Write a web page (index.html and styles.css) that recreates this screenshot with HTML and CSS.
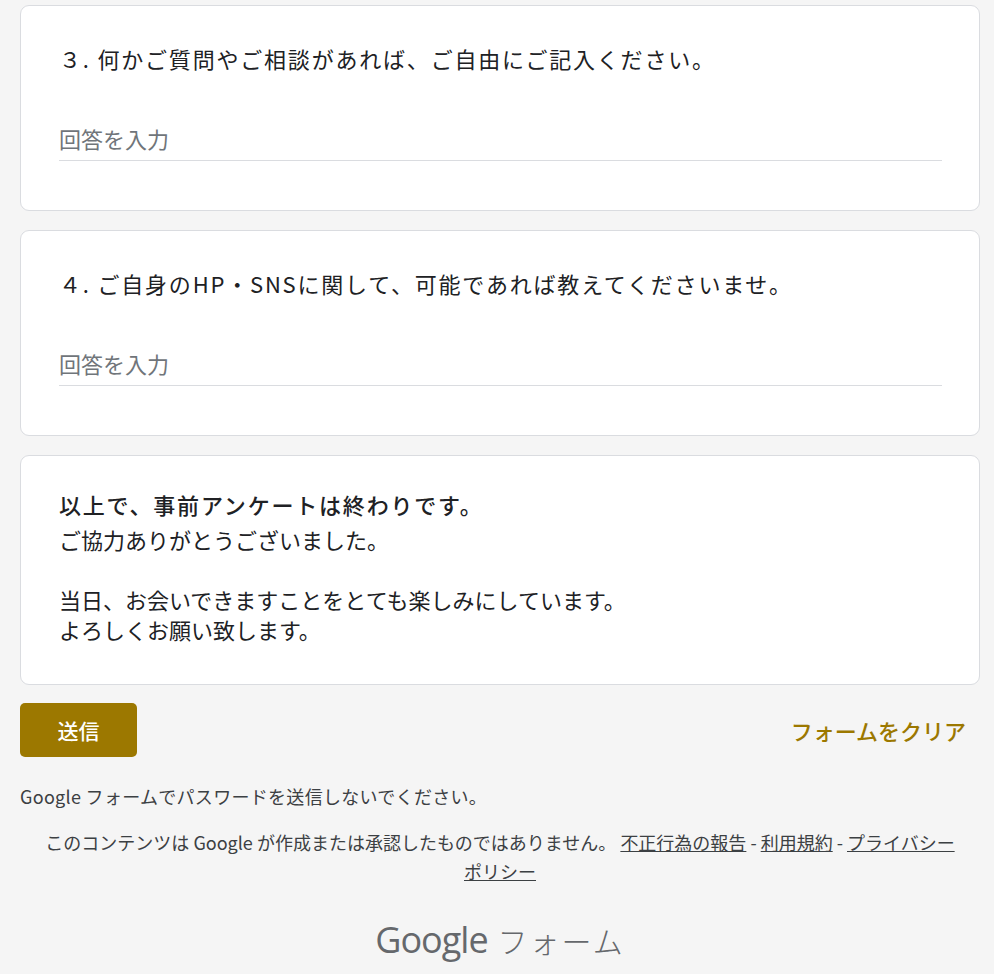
FILE: index.html
```html
<!doctype html>
<html lang="ja">

<head>
  <meta charset="utf-8" />
  <meta name="viewport" content="width=device-width, initial-scale=1.0" />
  <link rel="stylesheet" href="styles.css">
</head>

<body>
  <div class="form">
    <div class="card">
      <div class="question">３. 何かご質問やご相談があれば、ご自由にご記入ください。</div>
      <div class="answer">回答を入力</div>
    </div>

    <div class="card">
      <div class="question">４. ご自身のHP・SNSに関して、可能であれば教えてくださいませ。</div>
      <div class="answer">回答を入力</div>
    </div>

    <div class="card end">
      <div class="end-title">以上で、事前アンケートは終わりです。</div>
      <div class="end-text">
        ご協力ありがとうございました。<br>
        <br>
        当日、お会いできますことをとても楽しみにしています。<br>
        よろしくお願い致します。
      </div>
    </div>

    <div class="actions">
      <button class="submit">送信</button>
      <a class="clear">フォームをクリア</a>
    </div>

    <p class="warning">Google フォームでパスワードを送信しないでください。</p>

    <p class="footer">
      このコンテンツは Google が作成または承認したものではありません。
      <a href="#">不正行為の報告</a> - <a href="#">利用規約</a> - <a href="#">プライバシー<br>ポリシー</a>
    </p>

    <div class="brand"><span class="brand-google">Google</span><span class="brand-name">フォーム</span></div>
  </div>
</body>

</html>
```

FILE: styles.css
```css
:root {
  --accent: #9c7800;
  --text: #202124;
  --muted: #70757a;
  --line: #dadce0;
}

body {
  margin: 0;
  background: #f5f5f5;
  font-family: "Noto Sans CJK JP", "Noto Sans", sans-serif;
  color: var(--text);
}

.form {
  width: 960px;
  padding: 5px 0 0 20px;
  display: flex;
  flex-direction: column;
  gap: 19px;
}

.card {
  background: #fff;
  border: 1px solid var(--line);
  border-radius: 9px;
  padding: 34px 37px 49px 38px;
}

.question {
  font-size: 22px;
  line-height: 36px;
  letter-spacing: 1.8px;
}

.answer {
  margin-top: 45px;
  height: 40px;
  padding-bottom: 5px;
  box-sizing: border-box;
  display: flex;
  align-items: center;
  font-size: 22px;
  color: var(--muted);
  border-bottom: 1px solid var(--line);
}

.end {
  padding-top: 32px;
  padding-bottom: 40px;
}

.end-title {
  font-size: 22px;
  font-weight: 500;
  line-height: 32px;
  letter-spacing: 1.8px;
  margin-bottom: 4px;
}

.end-text {
  font-size: 22px;
  line-height: 30px;
}

.actions {
  display: flex;
  align-items: center;
  justify-content: space-between;
  margin-top: -1px;
}

.submit {
  width: 117px;
  height: 54px;
  border: none;
  border-radius: 5px;
  background: var(--accent);
  color: #fff;
  font-family: inherit;
  font-size: 21px;
  font-weight: 500;
}

.clear {
  color: var(--accent);
  font-size: 22px;
  font-weight: 500;
  padding-right: 14px;
}

.warning {
  margin: 7px 0 0;
  font-size: 18px;
  line-height: 26px;
  letter-spacing: 0.3px;
  color: #3c4043;
}

.footer {
  margin: 0;
  text-align: center;
  font-size: 18px;
  line-height: 29px;
  color: #3c4043;
}

.footer a {
  color: #3c4043;
}

.brand {
  margin-top: 13px;
  display: flex;
  justify-content: center;
  align-items: baseline;
  gap: 10px;
  line-height: 44px;
  color: #65686c;
}

.brand-google {
  font-family: "Open Sans", sans-serif;
  font-size: 36px;
  letter-spacing: -1px;
}

.brand-name {
  font-size: 30px;
  font-weight: 300;
  letter-spacing: 2px;
}
```
